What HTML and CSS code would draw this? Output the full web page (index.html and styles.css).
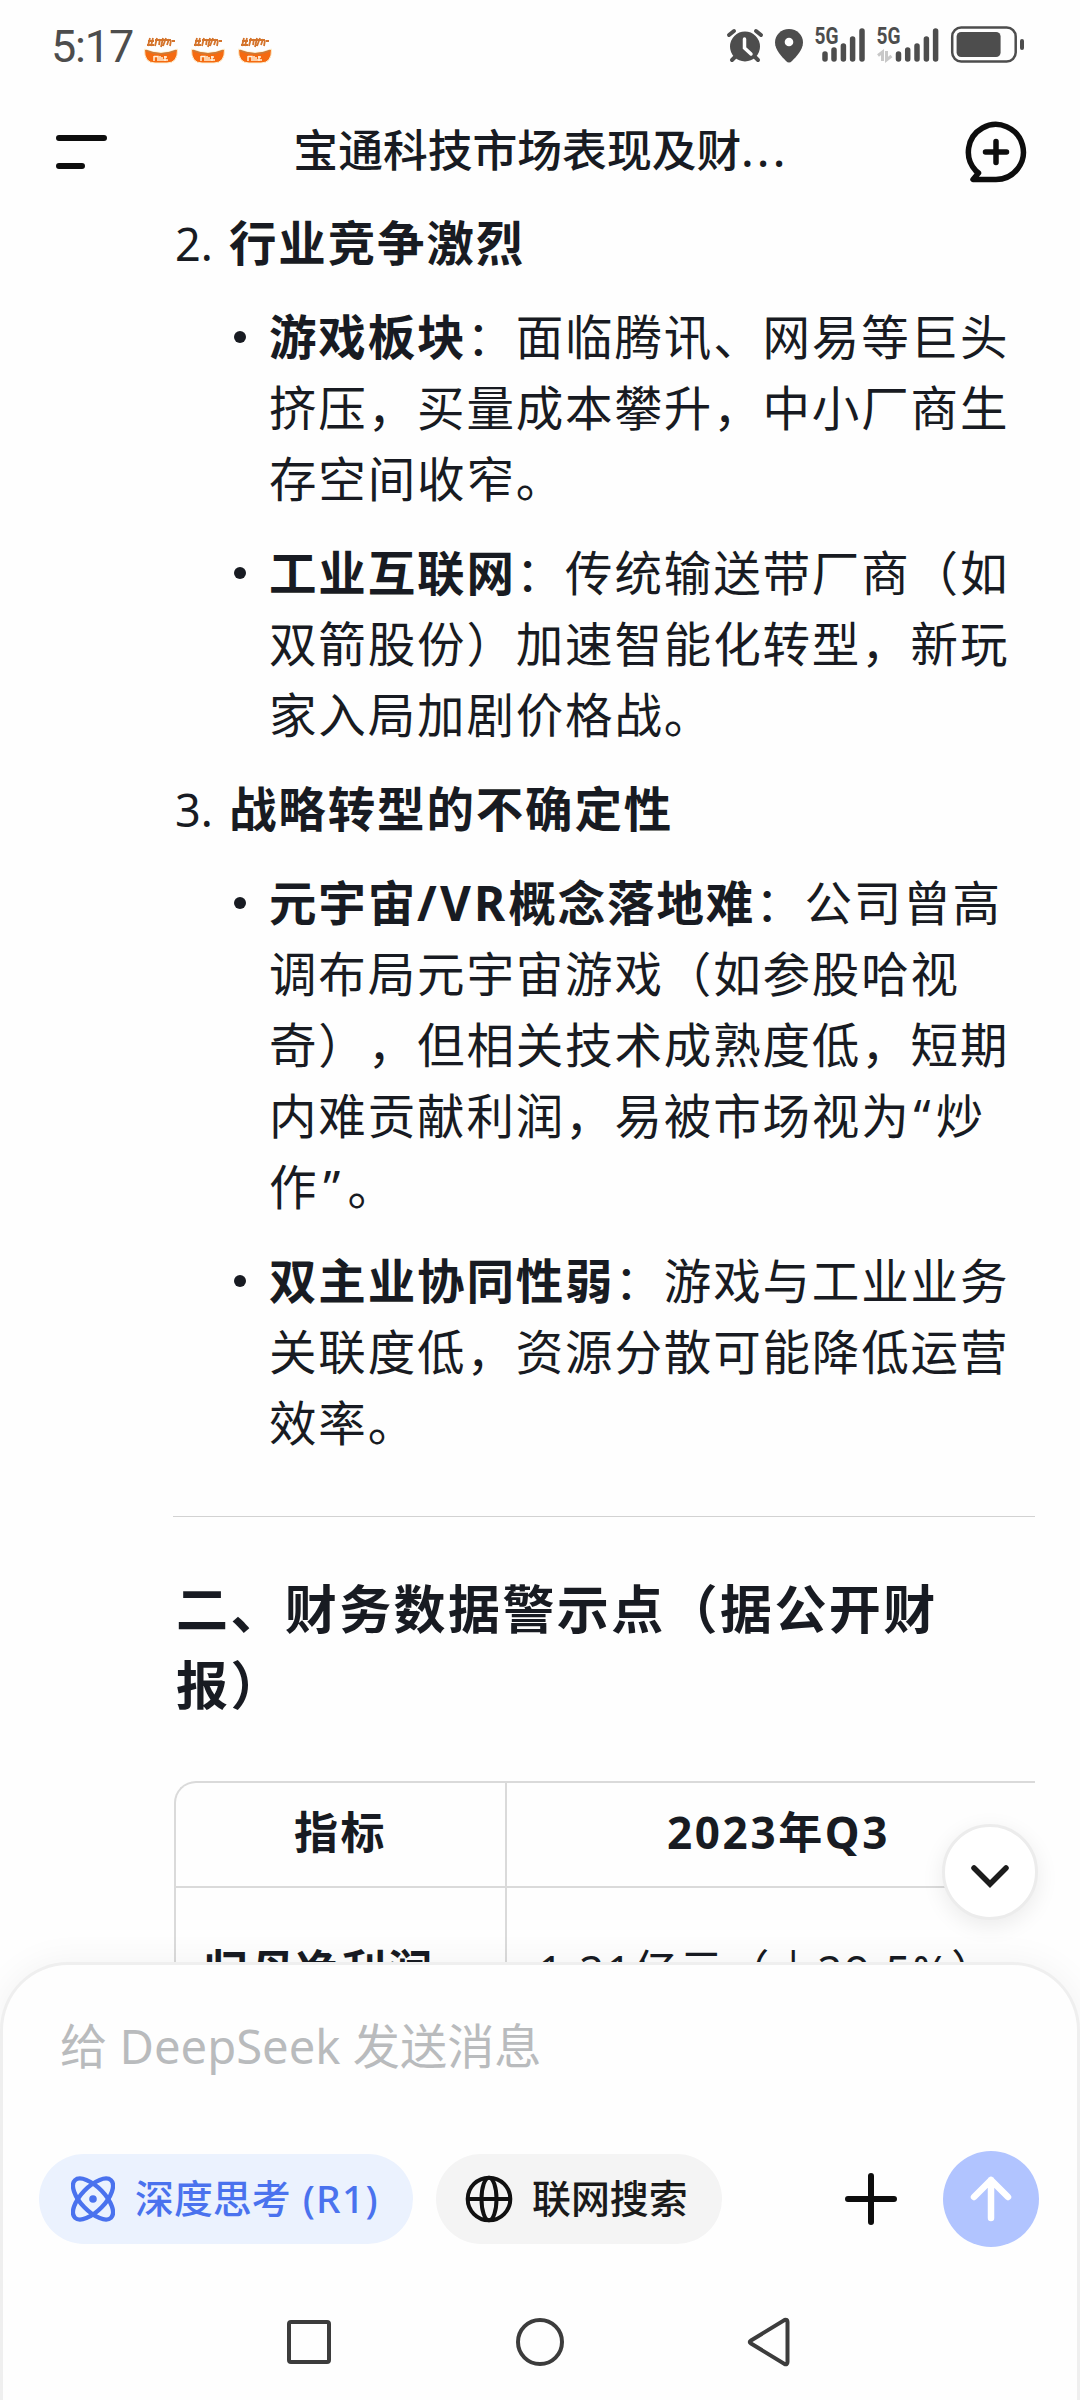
FILE: index.html
```html
<!DOCTYPE html>
<html lang="zh-CN">
<head>
  <meta charset="UTF-8" />
  <meta name="viewport" content="width=device-width, initial-scale=1.0" />
  <title>DeepSeek</title>
  <link rel="stylesheet" href="styles.css">
</head>
<body>
  <div class="phone">
    <div class="statusbar">
      <span class="time">5:17</span>
      <svg width="0" height="0" class="defs">
        <symbol id="bowl" viewBox="0 0 36 28">
          <path d="M1.500 13Q18 20 34.500 13Q35 27 24 27H12Q1 27 1.500 13Z" fill="#f56a10" stroke="#fdf0d0" stroke-width="1"/>
          <path d="M3 14.500Q18 21 33 14.500" fill="none" stroke="#cf7a35" stroke-width="1.600"/>
          <path d="M7 2L5 10M10 2L8 10M5 5H11M4 9H11M14 2L12 10M12 4H19M17 3L16 9M20 2L18 11M23 2L20 10M20 4H28M26 3L24 9M28 4L27 10M29 5H32" fill="none" stroke="#d4742c" stroke-width="1.800"/>
          <path d="M11 20V25M11 20.500H15V25M17 20V25M19 21V25M21 21H24M22 20V25M20 24H25" fill="none" stroke="#fff0d8" stroke-width="1.500"/>
        </symbol>
      </svg>
      <div class="bowls">
        <svg width="36" height="28"><use href="#bowl"/></svg>
        <svg width="36" height="28"><use href="#bowl"/></svg>
        <svg width="36" height="28"><use href="#bowl"/></svg>
      </div>
      <svg class="status-icons" width="300" height="54" viewBox="0 -12 300 54">
        <!-- alarm -->
        <g stroke="#4d4d4d" stroke-width="4" stroke-linecap="round">
          <path d="M4 9L9 5M36 9L31 5M7 34L10 31M33 34L30 31"/>
          <circle cx="20" cy="20.500" r="13.500" fill="#4d4d4d" stroke-width="3"/>
          <path d="M19.500 13V22L26 28" fill="none" stroke="#fff" stroke-width="3.500"/>
        </g>
        <!-- location -->
        <path d="M64 3C56 3 50 9 50 16.500C50 24 57 31 61 35Q64 38 67 35C71 31 78 24 78 16.500C78 9 72 3 64 3Z" fill="#4d4d4d"/>
        <circle cx="64" cy="16" r="4.300" fill="#fff"/>
        <!-- sim 1 -->
        <text x="89.500" y="18" class="net" textLength="24" lengthAdjust="spacingAndGlyphs">5G</text>
        <path d="M100 28V33M109 24V33M118.400 20V33M127.600 13V33M137 5V33" class="bars"/>
        <!-- sim 2 -->
        <text x="151.500" y="18" class="net" textLength="24" lengthAdjust="spacingAndGlyphs">5G</text>
        <path d="M153 29.500L157.500 26V35M161.500 25V34L166.500 30" fill="none" stroke="#c8c8c8" stroke-width="3"/>
        <path d="M173.500 28V33M182.700 24V33M192 20V33M201.400 13V33M210.600 5V33" class="bars"/>
        <!-- battery -->
        <rect x="227.200" y="1.500" width="63.500" height="34" rx="9" fill="none" stroke="#4d4d4d" stroke-width="2.500"/>
        <rect x="231.600" y="6" width="44" height="25" rx="4.500" fill="#4d4d4d"/>
        <rect x="295" y="13" width="4" height="11" rx="2" fill="#4d4d4d"/>
      </svg>
    </div>

    <header class="topbar">
      <svg width="52" height="36" viewBox="0 0 52 36">
        <path d="M3 4H48M3 32H26" stroke="#0d0d0d" stroke-width="6" stroke-linecap="round"/>
      </svg>
      <h1>宝通科技市场表现及财<span class="dots">...</span></h1>
      <svg width="62" height="62" viewBox="0 0 62 62" fill="none" stroke="#0d0d0d" stroke-width="5.500" stroke-linecap="round" stroke-linejoin="round">
        <path d="M31 58.500A27.500 27.500 0 1 0 11 50L13.500 52L8 58.500H31"/>
        <path d="M31 20.500V41.500M20.500 31H41.500"/>
      </svg>
    </header>

    <main class="content">
      <section class="item">
        <h3><span class="num">2.</span>行业竞争激烈</h3>
        <ul>
          <li><b>游戏板块</b>：面临腾讯、网易等巨头<br>挤压，买量成本攀升，中小厂商生<br>存空间收窄。</li>
          <li><b>工业互联网</b>：传统输送带厂商（如<br>双箭股份）加速智能化转型，新玩<br>家入局加剧价格战。</li>
        </ul>
      </section>
      <section class="item">
        <h3><span class="num">3.</span>战略转型的不确定性</h3>
        <ul>
          <li><b>元宇宙<span class="latin">/VR</span>概念落地难</b>：公司曾高<br>调布局元宇宙游戏（如参股哈视<br>奇），但相关技术成熟度低，短期<br>内难贡献利润，易被市场视为<span class="quote">“</span>炒<br>作<span class="quote end">”</span>。</li>
          <li><b>双主业协同性弱</b>：游戏与工业业务<br>关联度低，资源分散可能降低运营<br>效率。</li>
        </ul>
      </section>
      <hr>
      <h2>二、财务数据警示点（据公开财<br>报）</h2>
      <div class="table">
        <div class="tr head">
          <div class="td">指标</div>
          <div class="td">2023年Q3</div>
        </div>
        <div class="tr">
          <div class="td"><b>归母净利润</b></div>
          <div class="td">1.21亿元（↓29.5%）</div>
        </div>
      </div>
    </main>

    <button class="to-bottom">
      <svg width="38" height="24" viewBox="0 0 38 24">
        <path d="M3 3L19 19L35 3" fill="none" stroke="#1c1c1c" stroke-width="5.500" stroke-linecap="round"/>
      </svg>
    </button>

    <footer class="composer">
      <div class="placeholder">给 DeepSeek 发送消息</div>
      <div class="actions">
        <div class="chip on">
          <svg width="44" height="46" viewBox="0 0 44 46" fill="none" stroke="#4a72ee" stroke-width="4.300">
            <ellipse cx="22" cy="23" rx="26" ry="12" transform="rotate(46 22 23)"/>
            <ellipse cx="22" cy="23" rx="26" ry="12" transform="rotate(-46 22 23)"/>
            <circle cx="22" cy="23" r="3.800" fill="#4a72ee" stroke="none"/>
          </svg>
          <span>深度思考 <span class="model">(R1)</span></span>
        </div>
        <div class="chip">
          <svg width="48" height="48" viewBox="0 0 48 48" fill="none" stroke="#111" stroke-width="4">
            <circle cx="24" cy="24" r="21.300"/>
            <ellipse cx="24" cy="24" rx="7.500" ry="21.300"/>
            <path d="M3 24H45"/>
          </svg>
          <span>联网搜索</span>
        </div>
        <svg class="plus" width="52" height="54" viewBox="0 0 52 54">
          <path d="M3 27H49M26 4V50" stroke="#0d0d0d" stroke-width="6" stroke-linecap="round"/>
        </svg>
        <div class="send">
          <svg width="42" height="48" viewBox="0 0 42 48">
            <path d="M21 43V5M4 22L21 5L38 22" fill="none" stroke="#fff" stroke-width="6.500" stroke-linecap="round" stroke-linejoin="round"/>
          </svg>
        </div>
      </div>
      <div class="navbar">
        <svg width="48" height="50" viewBox="0 0 48 50"><rect x="4" y="5" width="40" height="40" rx="2"/></svg>
        <svg width="48" height="50" viewBox="0 0 48 50"><circle cx="24" cy="25" r="22"/></svg>
        <svg width="48" height="50" viewBox="0 0 48 50"><path d="M4 23.500L37.500 3Q40.500 2 40.500 5V45Q40.500 48 37.500 47L4 26.500Q1.500 25 4 23.500Z"/></svg>
      </div>
    </footer>
  </div>
</body>
</html>
```

FILE: styles.css
```css
* {
  box-sizing: border-box;
}

body {
  margin: 0;
  font-family: 'Noto Sans', 'Noto Sans CJK SC', sans-serif;
  background: #fefefe;
  color: #181b22;
  text-spacing-trim: space-all;
}

h1, h2, h3, ul {
  margin: 0;
  padding: 0;
}

.phone {
  position: relative;
  width: 1080px;
  height: 2400px;
  overflow: hidden;
  display: flex;
  flex-direction: column;
}

/* status bar */
.statusbar {
  height: 100px;
  flex: none;
  display: flex;
  align-items: flex-start;
  padding: 0 55px 0 51px;
}

.time {
  width: 92px;
  padding-top: 20px;
  font-family: Roboto, sans-serif;
  font-size: 45px;
  line-height: 53px;
  letter-spacing: -1.2px;
  color: #4d4d4d;
}

.defs {
  position: absolute;
}

.bowls {
  display: flex;
  gap: 11px;
  padding-top: 36px;
}

.status-icons {
  margin: 14px 0 0 auto;
}

.net {
  font-family: Roboto, sans-serif;
  font-size: 23px;
  font-weight: 700;
  fill: #4d4d4d;
}

.bars {
  stroke: #4d4d4d;
  stroke-width: 5.5;
  stroke-linecap: round;
}

/* top bar */
.topbar {
  height: 104px;
  flex: none;
  display: flex;
  align-items: center;
  justify-content: space-between;
  padding: 0 53px 0 56px;
}

.topbar h1 {
  font-size: 44.8px;
  font-weight: 500;
  line-height: 60px;
  padding: 0 0 4px 9px;
}

.dots {
  letter-spacing: 3.6px;
}

/* answer */
.content {
  flex: 1;
  min-height: 0;
  overflow: hidden;
  padding: 3px 45px 0 173px;
  font-size: 47.5px;
  line-height: 71px;
  letter-spacing: 1.85px;
  white-space: nowrap;
}

.item {
  padding-left: 1px;
}

.item h3 {
  display: flex;
  height: 71px;
  font-size: 47.5px;
  line-height: 71px;
  margin-bottom: 23px;
}

.num {
  width: 55px;
  padding: 1px 0 0 1px;
  font-size: 45px;
  font-weight: 400;
  letter-spacing: 0;
}

.item li {
  position: relative;
  list-style: none;
  margin-bottom: 23px;
  padding-left: 95px;
}

.item li::before {
  content: '';
  position: absolute;
  left: 60px;
  top: 30px;
  width: 12px;
  height: 12px;
  border-radius: 50%;
  background: #181b22;
}

.latin {
  letter-spacing: 3.2px;
}

.quote {
  padding-left: 3px;
  letter-spacing: 5px;
}

.quote.end {
  padding-left: 5px;
  letter-spacing: 7px;
}

hr {
  margin: 58px 0 54px;
  border: 0;
  border-top: 1px solid #d2d2d2;
  width: 862px;
}

h2 {
  padding-left: 3px;
  font-size: 52px;
  line-height: 76px;
  letter-spacing: 2.4px;
}

.table {
  width: 1000px;
  margin: 58px 0 0 1px;
  border: 2px solid #dadada;
  border-right: 0;
  border-radius: 22px 0 0 0;
  font-size: 44px;
  letter-spacing: 2px;
  clip-path: inset(0 139px 0 0);
}

.tr {
  display: flex;
  height: 164px;
  align-items: stretch;
}

.tr.head {
  height: 105px;
  font-weight: 700;
  border-bottom: 2px solid #dadada;
}

.td {
  display: flex;
  align-items: center;
  width: 543px;
  padding-left: 31px;
}

.td:first-child {
  width: 331px;
  padding-left: 28px;
  border-right: 2px solid #dadada;
}

.head .td,
.head .td:first-child {
  justify-content: center;
  padding: 0 0 4px;
}

.head .td {
  letter-spacing: 2.6px;
}

.to-bottom {
  position: absolute;
  left: 942px;
  top: 1824px;
  width: 96px;
  height: 96px;
  display: flex;
  align-items: center;
  justify-content: center;
  padding: 9px 0 0;
  border: 3px solid #ececec;
  border-radius: 50%;
  background: #fff;
  box-shadow: 0 6px 22px rgba(0, 0, 0, 0.08);
}

/* input sheet */
.composer {
  position: relative;
  flex: none;
  height: 438px;
  margin-top: -72px;
  border: 3px solid #efefef;
  border-bottom: 0;
  border-radius: 68px 68px 0 0;
  background: #fefefe;
  box-shadow: 0 0 36px rgba(0, 0, 0, 0.05);
}

.placeholder {
  height: 189px;
  padding: 47px 0 0 57px;
  font-size: 47.2px;
  line-height: 68px;
  color: #b9bbbd;
}

.actions {
  display: flex;
  align-items: center;
  height: 90px;
  padding: 0 38px 0 36px;
}

.chip {
  display: flex;
  align-items: center;
  height: 90px;
  width: 286px;
  padding-left: 29px;
  gap: 19px;
  border-radius: 45px;
  background: #f4f4f4;
  color: #1a1a1a;
  font-size: 38.9px;
  font-weight: 500;
  white-space: nowrap;
}

.chip > span {
  padding-bottom: 6px;
}

.chip.on {
  width: 374px;
  margin-right: 23px;
  padding-left: 32px;
  gap: 20px;
  background: #ebf2fe;
  color: #4a72ee;
}

.model {
  padding-left: 2px;
  letter-spacing: 1.3px;
}

.plus {
  margin-left: auto;
}

.send {
  display: flex;
  align-items: center;
  justify-content: center;
  width: 96px;
  height: 96px;
  margin-left: 46px;
  border-radius: 50%;
  background: #b1c4ff;
}

.navbar {
  display: flex;
  justify-content: center;
  gap: 183px;
  padding-top: 73px;
}

.navbar svg {
  fill: none;
  stroke: #3c3c3c;
  stroke-width: 4;
}
```
